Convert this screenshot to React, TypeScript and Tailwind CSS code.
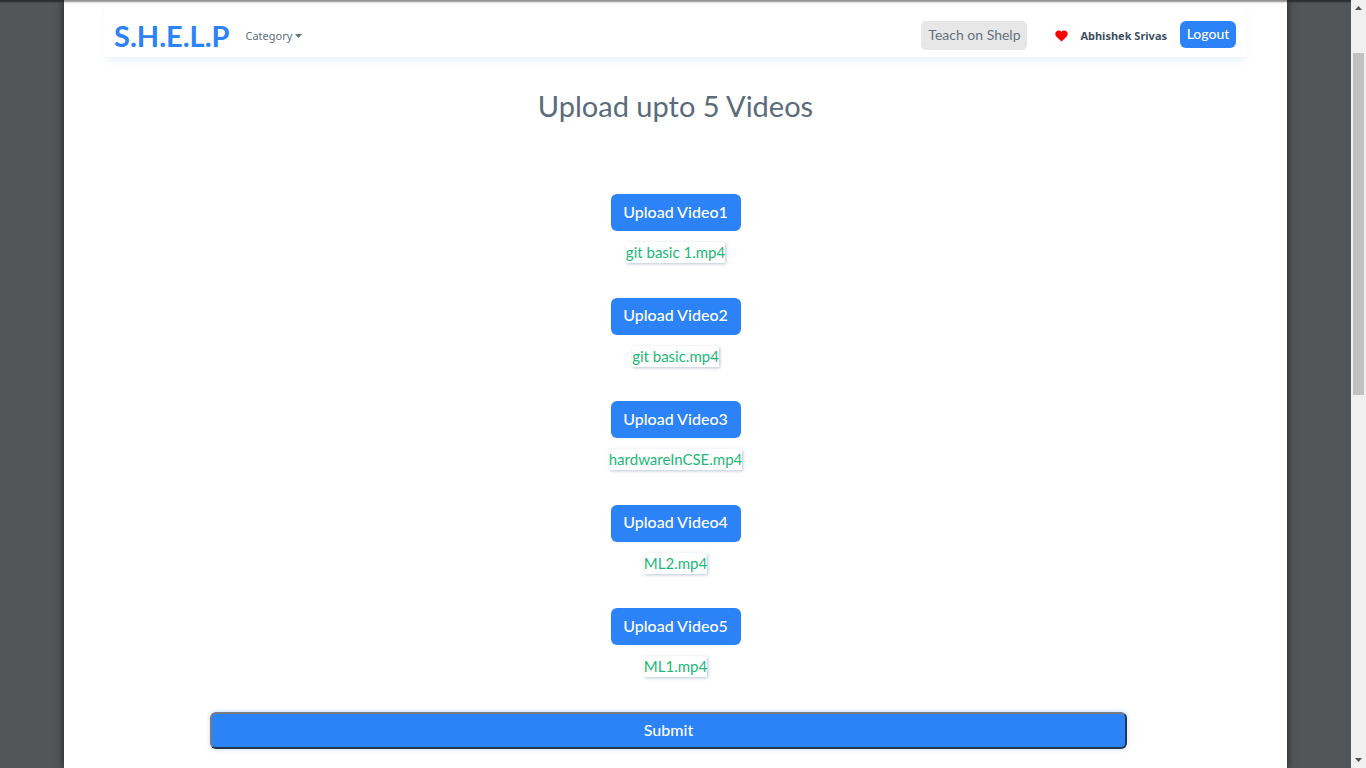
import React from "react";

const videos = [
  "git basic 1.mp4",
  "git basic.mp4",
  "hardwareInCSE.mp4",
  "ML2.mp4",
  "ML1.mp4",
];

function NavBar() {
  return (
    <nav className="mx-10 flex h-[57px] items-center pt-[15px] pr-[11px] pl-[10px] shadow-[0_6px_8px_-3px_rgba(44,130,247,0.12)]">
      <a href="#home" className="text-[29px] leading-9 font-bold text-[#2c82f7]">
        S.H.E.L.P
      </a>
      <button
        type="button"
        className="ml-4 flex items-center gap-[3px] font-['Noto_Sans',sans-serif] text-[11px] text-[#5f6f7e]"
      >
        Category
        <svg width="7" height="4" viewBox="0 0 7 4" aria-hidden="true">
          <path d="M0 0h7L3.500 4z" fill="#5f6f7e" />
        </svg>
      </button>
      <div className="ml-auto flex items-center">
        <button
          type="button"
          className="mb-[2px] h-[29px] w-[106px] rounded-[5px] bg-[#e7e7e7] text-sm text-[#63727f]"
        >
          Teach on Shelp
        </button>
        <a href="#wishlist" aria-label="Wishlist" className="ml-7">
          <svg width="13" height="12" viewBox="0 0 13 12" aria-hidden="true">
            <path
              d="M6.500 11.500 1.300 6.400C-.2 4.900 0 2.400 1.700 1.200 3.200.1 5.200.5 6.500 1.900 7.800.5 9.800.1 11.300 1.200 13 2.400 13.200 4.900 11.700 6.400z"
              fill="#ff0000"
            />
          </svg>
        </a>
        <span className="ml-3 font-['Noto_Sans',sans-serif] text-[11px] font-bold text-[#3f4f5f]">
          Abhishek Srivas
        </span>
        <button
          type="button"
          className="mb-1 ml-[13px] h-[27px] w-14 rounded-md bg-[#2c82f7] text-sm font-medium text-white"
        >
          Logout
        </button>
      </div>
    </nav>
  );
}

function VideoSlot({ index, file }: { index: number; file: string }) {
  return (
    <li className="flex flex-col items-center">
      <button
        type="button"
        className="h-[37px] w-[130px] shrink-0 rounded-md bg-[#2c82f7] pb-[2px] text-base font-medium text-white"
      >
        Upload Video{index}
      </button>
      <span className="mt-[11px] text-[15px] leading-[21px] text-[#1cb877] shadow-[1px_1px_3px_rgba(60,90,140,0.35)]">
        {file}
      </span>
    </li>
  );
}

function ScrollBar() {
  return (
    <div className="flex w-[15px] shrink-0 flex-col items-center bg-[#f0f0f0]" aria-hidden="true">
      <svg width="15" height="53" viewBox="0 0 15 53">
        <path d="M4 10h7L7.500 6z" fill="#505050" />
      </svg>
      <div className="h-[342px] w-[11px] bg-[#c1c1c1]" />
      <svg className="mt-auto" width="15" height="15" viewBox="0 0 15 15">
        <path d="M4 5h7L7.500 9z" fill="#505050" />
      </svg>
    </div>
  );
}

export default function App() {
  return (
    <div className="flex h-screen overflow-hidden bg-[#525659] font-[Lato,sans-serif]">
      <div className="flex min-w-0 flex-1 px-16 shadow-[inset_0_4px_2px_-2px_rgba(0,0,0,0.5)]">
        <div className="min-w-0 flex-1 bg-white shadow-[0_0_8px_rgba(0,0,0,0.65),inset_0_4px_2px_-2px_rgba(0,0,0,0.45)]">
          <NavBar />
          <main>
            <h1 className="mt-[31px] text-center text-[29px] leading-9 text-[#5a6b7b]">
              Upload upto 5 Videos
            </h1>
            <form onSubmit={(event) => event.preventDefault()}>
              <ul className="mt-[70px] grid h-[518px] grid-rows-5">
                {videos.map((file, i) => (
                  <VideoSlot key={file} index={i + 1} file={file} />
                ))}
              </ul>
              <div className="pr-40 pl-[146px]">
                <button
                  type="submit"
                  className="flex h-[37px] w-full items-center justify-center rounded-md border-2 border-t-[#767c84] border-r-[#26364c] border-b-[#26364c] border-l-[#767c84] bg-[#2c82f7] pb-[2px] text-base font-medium text-white shadow-[0_0_5px_rgba(44,130,247,0.3)]"
                >
                  Submit
                </button>
              </div>
            </form>
          </main>
        </div>
      </div>
      <ScrollBar />
    </div>
  );
}
